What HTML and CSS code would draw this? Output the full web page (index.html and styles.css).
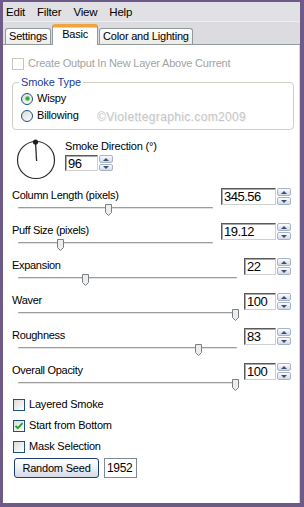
FILE: index.html
```html
<!DOCTYPE html>
<html>
<head>
<meta charset="utf-8">
<link rel="stylesheet" href="styles.css">
</head>
<body>
<div class="window">
  <div class="menubar">
    <span>Edit</span><span>Filter</span><span>View</span><span>Help</span>
  </div>
  <div class="tabstrip">
    <div class="tab">Settings</div>
    <div class="tab active">Basic</div>
    <div class="tab">Color and Lighting</div>
  </div>
  <div class="content">
    <div class="check disabled top"><span class="box"></span>Create Output In New Layer Above Current</div>

    <fieldset class="group">
      <legend>Smoke Type</legend>
      <div class="radio checked"><span class="dot"></span>Wispy</div>
      <div class="radio"><span class="dot"></span>Billowing</div>
      <span class="watermark">©Violettegraphic.com2009</span>
    </fieldset>

    <div class="direction">
      <svg class="dial" width="42" height="42" viewBox="0 0 42 42">
        <circle cx="21" cy="21" r="18.5" fill="none" stroke="#2b2b2b" stroke-width="1.2"/>
        <line x1="20.5" y1="3" x2="21.6" y2="22" stroke="#2b2b2b" stroke-width="1.3"/>
        <circle cx="20.5" cy="3" r="2.6" fill="#1e1e1e"/>
      </svg>
      <div class="dirbox">
        <div class="dirlabel">Smoke Direction (°)</div>
        <div class="spin"><span class="field small">96</span><span class="arrows"><i class="up"></i><i class="dn"></i></span></div>
      </div>
    </div>

    <div class="sliders">
      <div class="srow">
        <div class="sleft short">
          <div class="slabel">Column Length (pixels)</div>
          <div class="slider"><svg class="thumb" style="left:87px" width="7" height="12" viewBox="0 0 7 12"><path d="M0.5 0.5H6.5V8.5L3.5 11.5L0.5 8.5Z" fill="#eceded" stroke="#7a7f86"/></svg></div>
        </div>
        <div class="spin"><span class="field wide">345.56</span><span class="arrows"><i class="up"></i><i class="dn"></i></span></div>
      </div>
      <div class="srow">
        <div class="sleft short">
          <div class="slabel">Puff Size (pixels)</div>
          <div class="slider"><svg class="thumb" style="left:39px" width="7" height="12" viewBox="0 0 7 12"><path d="M0.5 0.5H6.5V8.5L3.5 11.5L0.5 8.5Z" fill="#eceded" stroke="#7a7f86"/></svg></div>
        </div>
        <div class="spin"><span class="field wide">19.12</span><span class="arrows"><i class="up"></i><i class="dn"></i></span></div>
      </div>
      <div class="srow">
        <div class="sleft long">
          <div class="slabel">Expansion</div>
          <div class="slider"><svg class="thumb" style="left:64px" width="7" height="12" viewBox="0 0 7 12"><path d="M0.5 0.5H6.5V8.5L3.5 11.5L0.5 8.5Z" fill="#eceded" stroke="#7a7f86"/></svg></div>
        </div>
        <div class="spin"><span class="field narrow">22</span><span class="arrows"><i class="up"></i><i class="dn"></i></span></div>
      </div>
      <div class="srow">
        <div class="sleft long">
          <div class="slabel">Waver</div>
          <div class="slider"><svg class="thumb" style="left:214px" width="7" height="12" viewBox="0 0 7 12"><path d="M0.5 0.5H6.5V8.5L3.5 11.5L0.5 8.5Z" fill="#eceded" stroke="#7a7f86"/></svg></div>
        </div>
        <div class="spin"><span class="field narrow">100</span><span class="arrows"><i class="up"></i><i class="dn"></i></span></div>
      </div>
      <div class="srow">
        <div class="sleft long">
          <div class="slabel">Roughness</div>
          <div class="slider"><svg class="thumb" style="left:177px" width="7" height="12" viewBox="0 0 7 12"><path d="M0.5 0.5H6.5V8.5L3.5 11.5L0.5 8.5Z" fill="#eceded" stroke="#7a7f86"/></svg></div>
        </div>
        <div class="spin"><span class="field narrow">83</span><span class="arrows"><i class="up"></i><i class="dn"></i></span></div>
      </div>
      <div class="srow">
        <div class="sleft long">
          <div class="slabel">Overall Opacity</div>
          <div class="slider"><svg class="thumb" style="left:214px" width="7" height="12" viewBox="0 0 7 12"><path d="M0.5 0.5H6.5V8.5L3.5 11.5L0.5 8.5Z" fill="#eceded" stroke="#7a7f86"/></svg></div>
        </div>
        <div class="spin"><span class="field narrow">100</span><span class="arrows"><i class="up"></i><i class="dn"></i></span></div>
      </div>
    </div>

    <div class="checks">
      <div class="check"><span class="box"></span>Layered Smoke</div>
      <div class="check"><span class="box on"><svg width="10" height="10" viewBox="0 0 10 10"><path d="M1.5 4.8L3.8 7.2L8.5 2.2" fill="none" stroke="#21a121" stroke-width="1.8"/></svg></span>Start from Bottom</div>
      <div class="check"><span class="box"></span>Mask Selection</div>
    </div>

    <div class="seed">
      <div class="button">Random Seed</div>
      <div class="seedfield">1952</div>
    </div>
  </div>
</div>
</body>
</html>
```

FILE: styles.css
```css
html, body {
  margin: 0;
  padding: 0;
  background: #fff;
}
body {
  font-family: "Liberation Sans", Arial, sans-serif;
  font-size: 11px;
  letter-spacing: -0.2px;
  color: #000;
}
.window {
  width: 304px;
  height: 507px;
  box-sizing: border-box;
  border-style: solid;
  border-color: #6d5a87;
  border-width: 2px 4px 4px 3px;
  background: #fff;
  display: flex;
  flex-direction: column;
  overflow: hidden;
}
.menubar {
  height: 19px;
  background: #e1e0e4;
  display: flex;
  align-items: center;
  gap: 12px;
  padding-left: 3px;
  line-height: 13px;
  padding-top: 1px;
  box-sizing: border-box;
  font-size: 11.5px;
}
.tabstrip {
  height: 24px;
  box-sizing: border-box;
  background: #dcdce0;
  border-top: 1px solid #ededf0;
  border-bottom: 1px solid #919b9c;
  display: flex;
  align-items: flex-end;
  padding-left: 2px;
  gap: 1px;
}
.tab {
  height: 16px;
  box-sizing: border-box;
  border: 1px solid #919b9c;
  border-bottom: none;
  border-radius: 3px 3px 0 0;
  background: linear-gradient(#ffffff, #ecebe6);
  padding: 0 3px;
  line-height: 15px;
  font-size: 11px;
}
.tab.active {
  height: 21px;
  margin-bottom: -1px;
  background: #fff;
  border-top: 3px solid #f1a43b;
  box-shadow: inset 0 1px 0 #ffcf6a;
  padding: 0 9px;
  line-height: 14px;
}
.content {
  flex: 1;
  padding: 0 8px 0 9px;
  border-right: 1px solid #d6d6d6;
}
.check {
  display: flex;
  align-items: center;
  height: 13px;
  line-height: 13px;
}
.check .box {
  width: 12px;
  height: 12px;
  box-sizing: border-box;
  border: 1px solid #1c5180;
  background: linear-gradient(135deg, #dcdcd7, #ffffff);
  margin: 0 4px 0 1px;
  display: flex;
  align-items: center;
  justify-content: center;
}
.check.disabled {
  color: #a3a3a3;
}
.check.disabled .box {
  border-color: #c9c7ba;
  background: #fff;
  margin-left: 0;
}
.check.top {
  margin-top: 12px;
}
.group {
  margin: 6px -3px 0 0;
  padding: 3px 6px 7px 8px;
  border: 1px solid #cfcfc4;
  border-radius: 4px;
  position: relative;
}
.group legend {
  color: #1d3d98;
  padding: 0 2px;
  font-size: 11px;
  letter-spacing: -0.1px;
  line-height: 13px;
  margin-left: -2px;
}
.radio {
  display: flex;
  align-items: center;
  height: 13px;
  line-height: 13px;
  font-size: 11px;
}
.radio + .radio {
  margin-top: 4px;
}
.radio .dot {
  width: 12px;
  height: 12px;
  box-sizing: border-box;
  border-radius: 50%;
  border: 1px solid #1c5180;
  background: linear-gradient(135deg, #d8d8d2, #ffffff);
  margin-right: 4px;
  position: relative;
}
.radio.checked .dot::after {
  content: "";
  position: absolute;
  left: 2.5px;
  top: 2.5px;
  width: 5px;
  height: 5px;
  border-radius: 50%;
  background: radial-gradient(circle, #28b32c 0 35%, #8fd98f 70%, #e2f3e2 100%);
}
.watermark {
  position: absolute;
  left: 84px;
  top: 21px;
  color: #c6c6c6;
  font-size: 12px;
  letter-spacing: 0.35px;
  text-shadow: 1px 1px 0 #f2f2f2;
}
.direction {
  display: flex;
  margin-top: 9px;
  height: 42px;
}
.dial {
  display: block;
  margin-left: 3px;
}
.dirbox {
  margin-left: 8px;
  margin-top: 1px;
}
.dirlabel {
  line-height: 13px;
  font-size: 11px;
  margin-bottom: 2px;
}
.spin {
  display: flex;
  gap: 1px;
  height: 17px;
}
.field {
  box-sizing: border-box;
  height: 17px;
  border: 1px solid;
  border-color: #5a5a5a #cfcfcf #cfcfcf #5a5a5a;
  box-shadow: inset 1px 1px 0 #a9a9a9;
  padding-left: 2px;
  font-size: 13px;
  letter-spacing: -0.5px;
  line-height: 16px;
  background: #fff;
}
.field.small {
  width: 33px;
  height: 16px;
  line-height: 15px;
}
.direction .spin {
  height: 16px;
}
.field.wide {
  width: 55px;
}
.field.narrow {
  width: 32px;
}
.arrows {
  width: 14px;
  display: flex;
  flex-direction: column;
  gap: 1px;
}
.arrows i {
  flex: 1;
  box-sizing: border-box;
  border: 1px solid #a7b3c7;
  border-radius: 2px;
  background: linear-gradient(#fbfcfe, #d3d9e6);
  position: relative;
}
.arrows i::after {
  content: "";
  position: absolute;
  left: 3px;
  top: 1.5px;
  border-left: 3px solid transparent;
  border-right: 3px solid transparent;
}
.arrows i.up::after {
  border-bottom: 3px solid #3f4f6e;
}
.arrows i.dn::after {
  border-top: 3px solid #3f4f6e;
}
.sliders {
  margin-top: 7px;
}
.srow {
  display: flex;
  justify-content: space-between;
  align-items: flex-start;
  height: 28px;
  margin-bottom: 7px;
}
.sleft.short {
  width: 201px;
}
.sleft.long {
  width: 225px;
}
.slabel {
  line-height: 13px;
  font-size: 11px;
  letter-spacing: -0.3px;
  padding-top: 1px;
  height: 13px;
}
.slider {
  position: relative;
  height: 15px;
  margin-left: 6px;
}
.slider::before {
  content: "";
  position: absolute;
  left: 0;
  right: 0;
  top: 5px;
  height: 1px;
  border-top: 1px solid #9c9c9c;
  border-bottom: 1px solid #ffffff;
  background: #e2e2e2;
  border-radius: 1px;
}
.thumb {
  position: absolute;
  top: 2px;
  display: block;
}
.checks {
  margin-top: 3px;
  display: flex;
  flex-direction: column;
  gap: 8px;
  font-size: 11px;
}
.seed {
  display: flex;
  gap: 5px;
  margin-top: 5px;
  margin-left: 2px;
}
.button {
  width: 85px;
  height: 20px;
  box-sizing: border-box;
  border: 1px solid #1f3f6e;
  border-radius: 3px;
  background: linear-gradient(#ffffff, #eef0f6 50%, #d4d9e6);
  text-align: center;
  line-height: 18px;
  font-size: 11px;
}
.seedfield {
  width: 33px;
  height: 20px;
  box-sizing: border-box;
  border: 1px solid #7d8a98;
  padding-left: 2px;
  font-size: 12px;
  line-height: 18px;
  letter-spacing: -0.3px;
}
```
